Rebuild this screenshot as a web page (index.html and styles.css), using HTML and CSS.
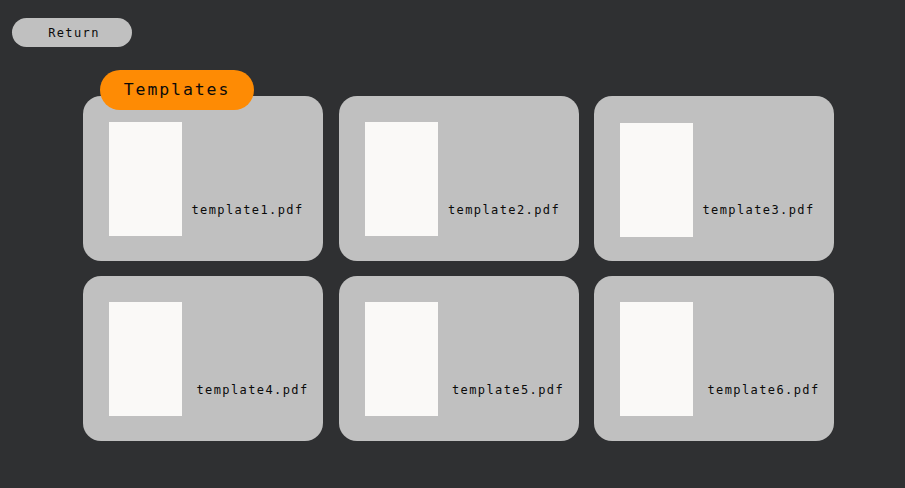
FILE: index.html
```html
<!DOCTYPE html>
<html>
<head>
<meta charset="utf-8">
<link rel="stylesheet" href="styles.css">
</head>
<body>
<div class="page">
  <button class="return-btn">Return</button>
  <section class="templates">
    <div class="tab">Templates</div>
    <div class="grid">
      <div class="card"><div class="thumb"></div><div class="label shift">template1.pdf</div></div>
      <div class="card"><div class="thumb"></div><div class="label shift-sm">template2.pdf</div></div>
      <div class="card"><div class="thumb low"></div><div class="label shift">template3.pdf</div></div>
      <div class="card"><div class="thumb"></div><div class="label">template4.pdf</div></div>
      <div class="card"><div class="thumb"></div><div class="label">template5.pdf</div></div>
      <div class="card"><div class="thumb"></div><div class="label">template6.pdf</div></div>
    </div>
  </section>
</div>
</body>
</html>
```
FILE: styles.css
```css
html, body {
  margin: 0;
  padding: 0;
  background: #2f3032;
  font-family: "DejaVu Sans Mono", "Liberation Mono", monospace;
  color: #0a0a0a;
}
.page {
  padding: 18px 0 0 12px;
}
.return-btn {
  display: block;
  width: 120px;
  height: 29px;
  border: none;
  border-radius: 15px;
  background: #c0c0c0;
  font-family: inherit;
  font-size: 12px;
  letter-spacing: 1.4px;
  color: #0a0a0a;
  padding: 0 0 0 4px;
  cursor: pointer;
}
.templates {
  position: relative;
  margin: 23px 0 0 71px;
  padding-top: 26px;
}
.tab {
  position: absolute;
  left: 17px;
  top: 0;
  width: 154px;
  height: 40px;
  border-radius: 20px;
  background: #fe8b04;
  font-size: 16.5px;
  letter-spacing: 1.9px;
  line-height: 40px;
  text-align: center;
  z-index: 1;
}
.grid {
  display: grid;
  grid-template-columns: repeat(3, 240px);
  grid-auto-rows: 165px;
  column-gap: 15.5px;
  row-gap: 15px;
}
.card {
  background: #c0c0c0;
  border-radius: 18px;
  display: flex;
  padding: 26px 0 0 26px;
  box-sizing: border-box;
}
.thumb {
  width: 73px;
  height: 114px;
  background: #faf9f7;
  flex: none;
}
.thumb.low {
  margin-top: 1px;
}
.label {
  flex: 1;
  text-align: center;
  font-size: 12px;
  letter-spacing: 1.4px;
  line-height: 16px;
  padding-top: 80px;
}
.label.shift {
  margin-left: -10px;
}
.label.shift-sm {
  margin-left: -8px;
}
```
